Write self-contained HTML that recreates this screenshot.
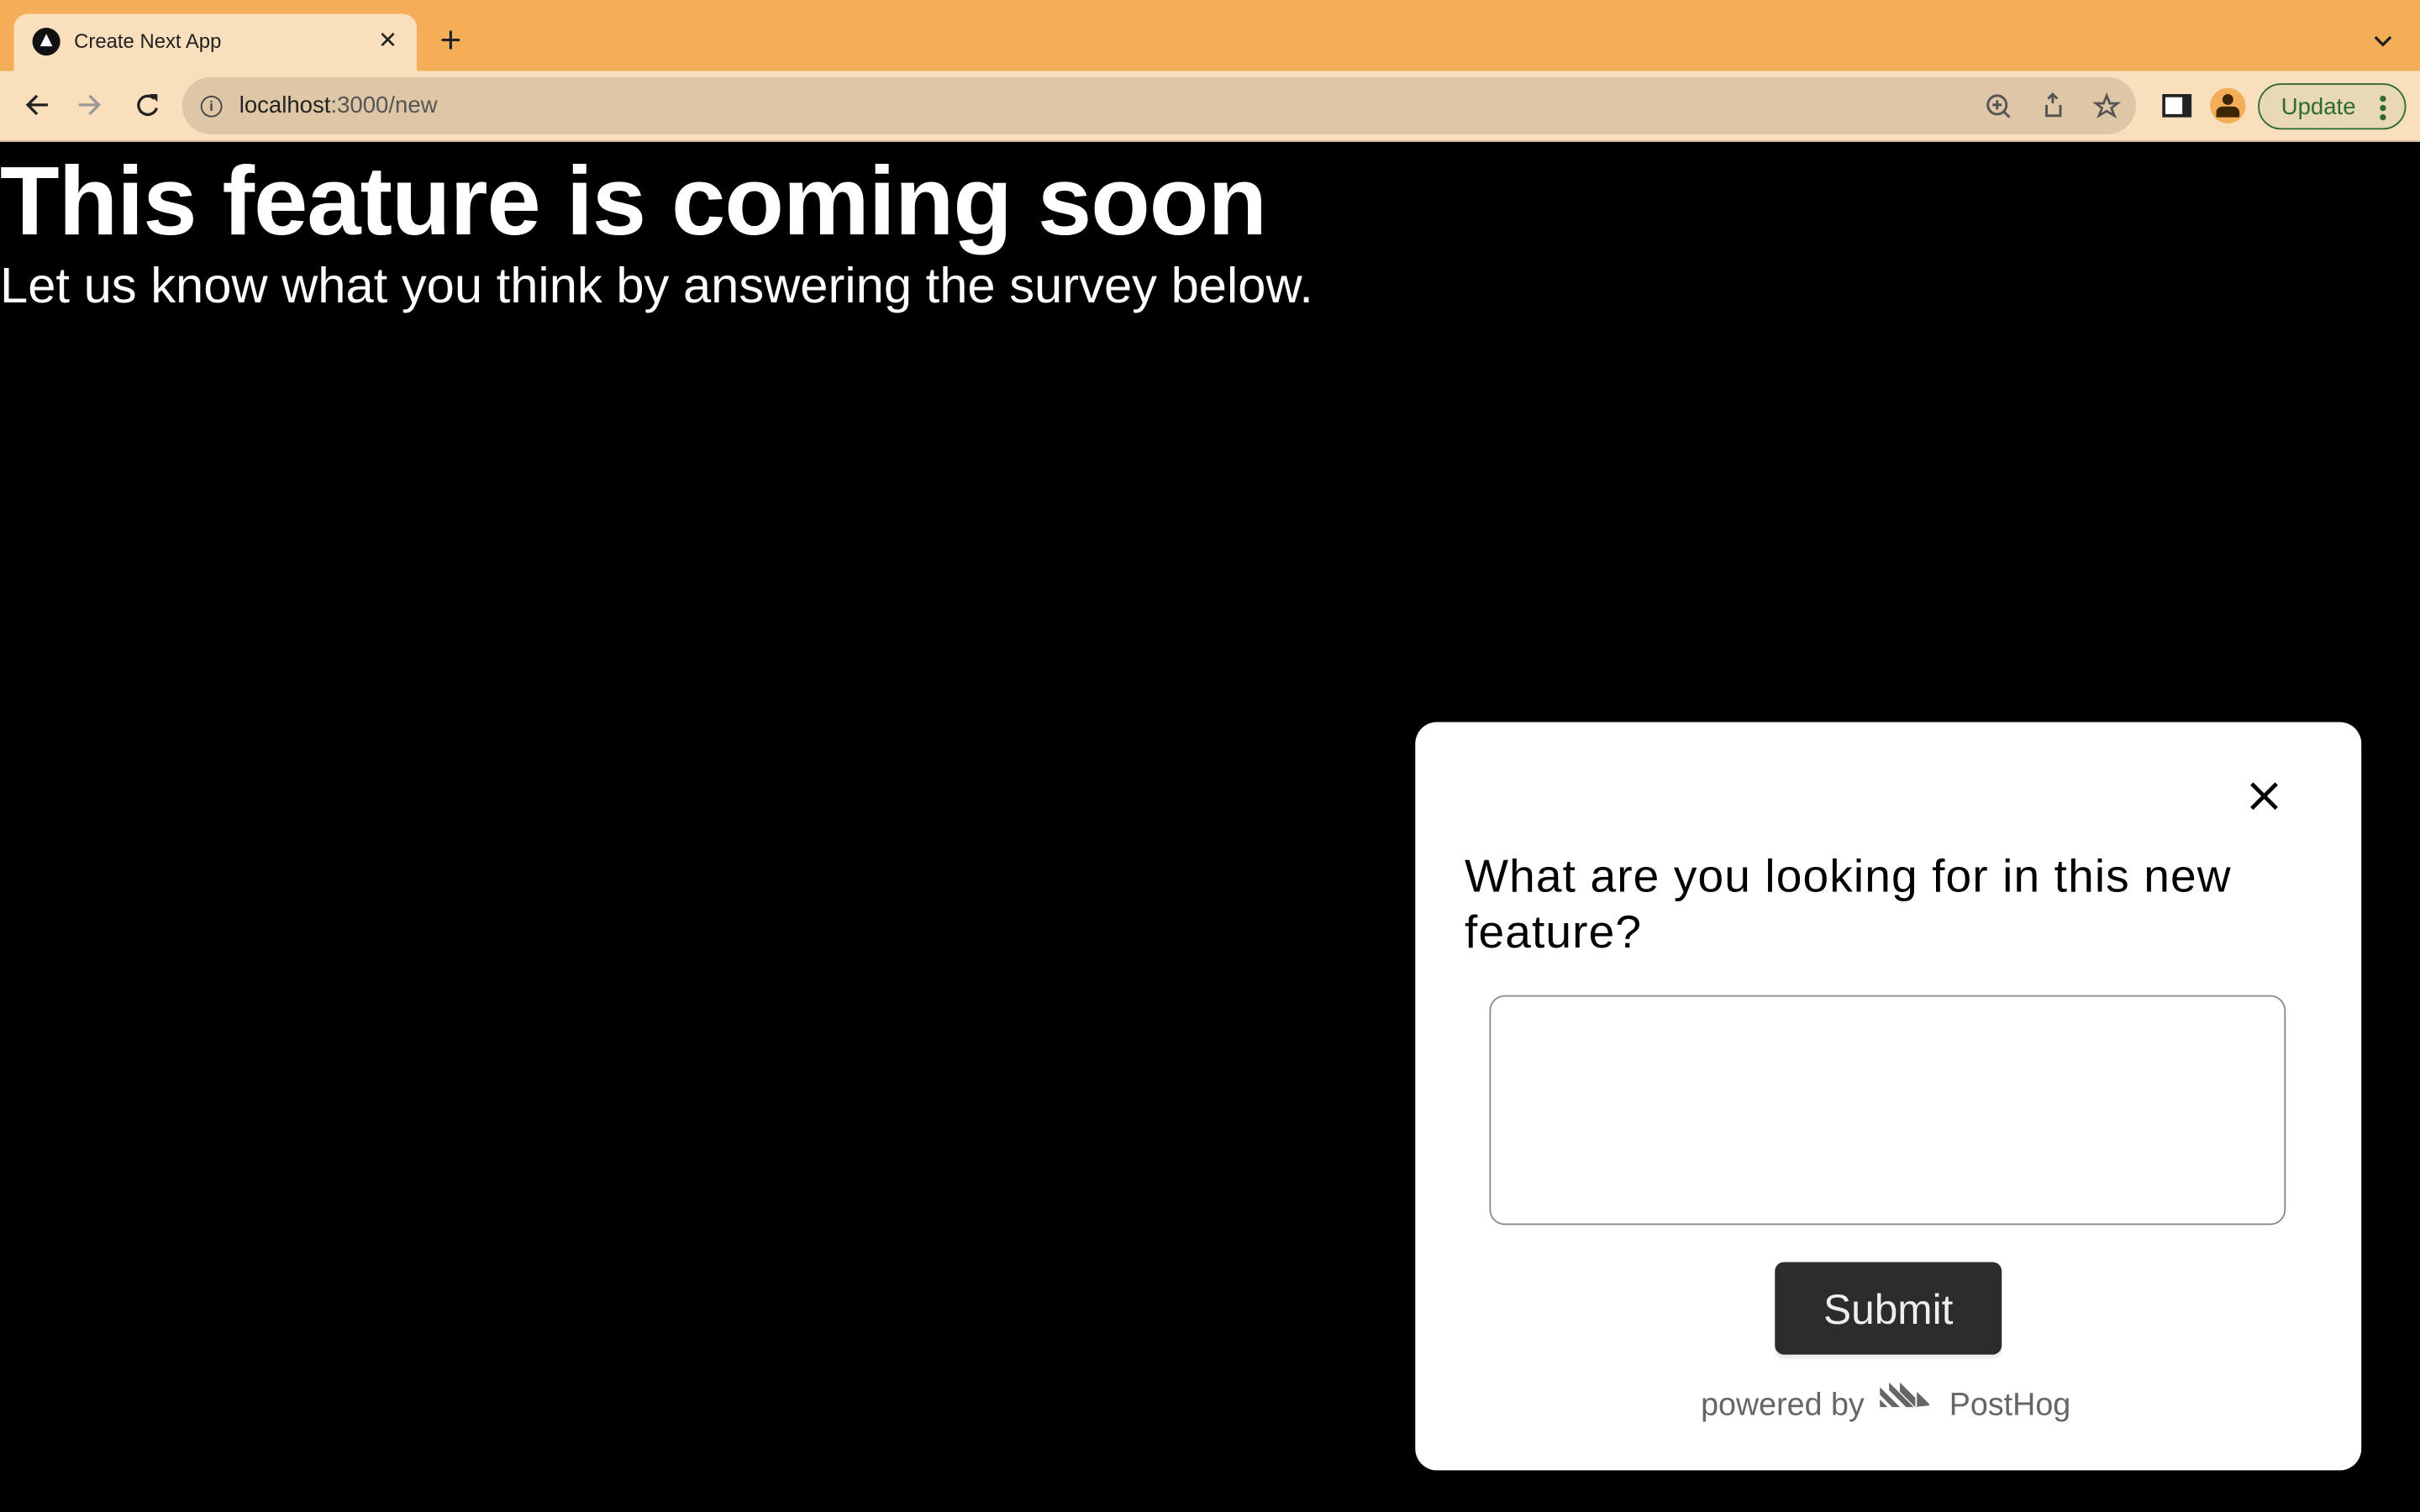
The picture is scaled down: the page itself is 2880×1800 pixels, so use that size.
<!DOCTYPE html>
<html><head><meta charset="utf-8"><style>
html,body{margin:0;padding:0;width:2880px;height:1800px;overflow:hidden;background:#000}
#w{position:absolute;left:0;top:0;width:1568px;height:980px;transform:scale(1.836735);transform-origin:0 0;font-family:"Liberation Sans",sans-serif}
.a{position:absolute}
</style></head><body><div id="w">
<div class="a" style="left:0;top:0;width:1568px;height:46px;background:#f3ae57"></div>
<div class="a" style="left:9px;top:9px;width:261px;height:40px;background:#f9dfbc;border-radius:9px 9px 0 0"></div>
<div class="a" style="left:21px;top:18px;width:18px;height:18px;border-radius:50%;background:#111"></div>
<div class="a" style="left:26px;top:22px;width:0;height:0;border-left:4px solid transparent;border-right:4px solid transparent;border-bottom:8px solid #fff"></div>
<div class="a" style="left:48px;top:19px;font-size:13px;color:#222">Create Next App</div>
<div class="a" style="left:245px;top:17px;font-size:15px;color:#222">✕</div>
<div class="a" style="left:285px;top:13px;font-size:24px;color:#222;line-height:28px">+</div>
<svg class="a" style="left:1537px;top:22px" width="14" height="10"><path d="M2 2l5 5 5-5" stroke="#222" stroke-width="1.8" fill="none"/></svg>
<div class="a" style="left:0;top:46px;width:1568px;height:45px;background:#f9dfbc;border-bottom:1px solid #cdb99a"></div>
<svg class="a" style="left:14px;top:59px" width="110" height="20"><path d="M17 9H4M10 3L4 9l6 6" stroke="#222" stroke-width="1.8" fill="none"/><path d="M37 9h13M44 3l6 6-6 6" stroke="#999" stroke-width="1.8" fill="none"/><path d="M86 5a6 6 0 1 0 1.5 6" stroke="#222" stroke-width="1.8" fill="none"/><path d="M83 2h5v5z" fill="#222"/></svg>
<div class="a" style="left:118px;top:50px;width:1266px;height:37px;background:#dec6a7;border-radius:19px"></div>
<div class="a" style="left:130px;top:62px;width:12px;height:12px;border:1.5px solid #444;border-radius:50%;font-size:9px;text-align:center;line-height:12px;color:#444;font-weight:bold">i</div>
<div class="a" style="left:155px;top:60px;font-size:15px;color:#222">localhost<span style="color:#555">:3000/new</span></div>
<svg class="a" style="left:1285px;top:59px" width="95" height="20"><circle cx="9" cy="9" r="6" stroke="#555" stroke-width="1.6" fill="none"/><path d="M13 13l4 4M6 9h6M9 6v6" stroke="#555" stroke-width="1.6"/><path d="M45 8v-6M42 5l3-3 3 3M41 9v7h9V9" stroke="#555" stroke-width="1.6" fill="none"/><path d="M80 3l2 5h5l-4 3 2 5-5-3-5 3 2-5-4-3h5z" stroke="#555" stroke-width="1.5" fill="none"/></svg>
<div class="a" style="left:1401px;top:61px;width:11px;height:11px;border:2.5px solid #222;border-right-width:6px;background:#fff"></div>
<div class="a" style="left:1432px;top:57px;width:23px;height:23px;border-radius:50%;background:#f3ae57;overflow:hidden"><div class="a" style="left:8px;top:4px;width:7px;height:7px;border-radius:50%;background:#3d2606"></div><div class="a" style="left:4px;top:12px;width:15px;height:7px;border-radius:4px 4px 0 0;background:#3d2606"></div></div>
<div class="a" style="left:1463px;top:54px;width:94px;height:28px;border:1.5px solid #2f6a30;border-radius:16px;background:#e8d8b4"></div>
<div class="a" style="left:1478px;top:61px;font-size:15px;color:#2f6a30">Update</div>
<div class="a" style="left:1542px;top:62px;width:4px;height:4px;border-radius:2px;background:#2f6a30;box-shadow:0 6px 0 #2f6a30,0 12px 0 #2f6a30"></div>
<div class="a" style="left:0;top:95px;font-size:63px;font-weight:bold;color:#fff;line-height:72px;letter-spacing:-0.6px">This feature is coming soon</div>
<div class="a" style="left:0;top:167px;font-size:32.5px;color:#fff;line-height:36px">Let us know what you think by answering the survey below.</div>
<div class="a" style="left:917px;top:468px;width:613px;height:485px;background:#fff;border-radius:14px"></div>
<svg class="a" style="left:1457px;top:506px" width="20" height="20"><path d="M2 2l16 16M18 2L2 18" stroke="#000" stroke-width="2.6"/></svg>
<div class="a" style="left:949px;top:551px;width:560px;font-size:30px;letter-spacing:0.6px;line-height:36px;color:#000">What are you looking for in this new feature?</div>
<div class="a" style="left:965px;top:645px;width:514px;height:147px;border:1.5px solid #888;border-radius:10px"></div>
<div class="a" style="left:1150px;top:818px;width:147px;height:60px;background:#2c2c2c;border-radius:6px;color:#eee;font-size:27px;text-align:center;line-height:62px;box-shadow:0 3px 0 #eee">Submit</div>
<div class="a" style="left:1102px;top:899px;font-size:20.5px;color:#666">powered by</div>
<svg class="a" style="left:1218px;top:896px" width="40" height="20"><path d="M0 3l13 13H8L0 8zM0 11l5 5H0zM6 0l16 16h-5L6 5zM13 0l10 10v6L13 6zM22 16l10-1V14l-8-8v10z" fill="#666"/></svg>
<div class="a" style="left:1263px;top:899px;font-size:20.5px;color:#666">PostHog</div>
</div></body></html>
